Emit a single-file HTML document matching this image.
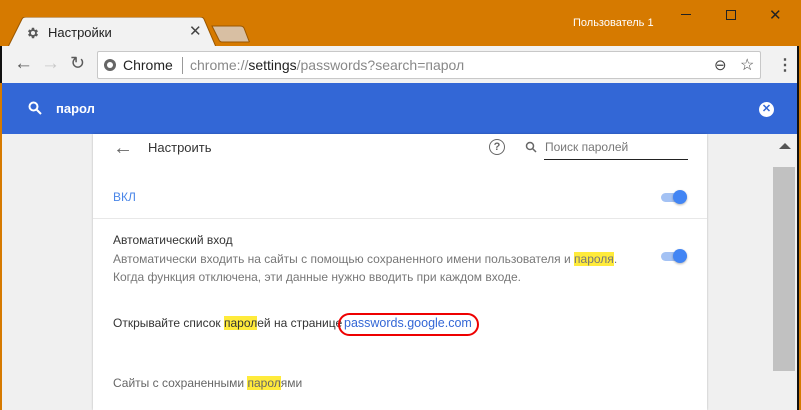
<!DOCTYPE html>
<html><head><meta charset="utf-8"><style>
*{margin:0;padding:0;box-sizing:border-box}
body{width:801px;height:410px;overflow:hidden;background:#d67a00;font-family:"Liberation Sans",Arial,sans-serif;position:relative}
.a{position:absolute}
.hl{background:#ffeb3b}
</style></head><body>
<svg class="a" style="left:0;top:17px" width="260" height="30"><path d="M8 30 L22 2 Q23 0 26 0 L200 0 Q203 0 204 2 L216 30 Z" fill="#f2f2f2" stroke="#9a5700" stroke-width="1"/><path d="M212 9 L240 9 Q243 9 244 11 L249 24 Q250 25 248 25 L222 25 Q220 25 219 23 Z" fill="#d8bfa3" stroke="#9a5700"/></svg>
<svg class="a" style="left:26px;top:26px" width="14" height="14" viewBox="0 0 24 24"><path fill="#5a5a5a" d="M19.4 13a7.5 7.5 0 000-2l2.1-1.6-2-3.5-2.5 1a7 7 0 00-1.7-1L15 3h-4l-.4 2.9a7 7 0 00-1.7 1l-2.5-1-2 3.5L6.6 11a7.5 7.5 0 000 2l-2.1 1.6 2 3.5 2.5-1a7 7 0 001.7 1L11 21h4l.4-2.9a7 7 0 001.7-1l2.5 1 2-3.5zM13 15.5a3.5 3.5 0 110-7 3.5 3.5 0 010 7z" transform="translate(-1 0)"/></svg>
<div class="a" style="left:48px;top:25px;font-size:13px;color:#222">Настройки</div>
<div class="a" style="left:189px;top:22px;font-size:15px;color:#444">✕</div>
<div class="a" style="left:573px;top:17px;font-size:11px;color:#fff">Пользователь 1</div>
<div class="a" style="left:681px;top:14px;width:10px;height:1px;background:#222"></div>
<div class="a" style="left:726px;top:10px;width:10px;height:10px;border:1px solid #222"></div>
<div class="a" style="left:769px;top:6px;font-size:15px;color:#222">✕</div>
<div class="a" style="left:0;top:46px;width:797px;height:37px;background:#f2f2f2;border-left:2px solid #111"></div>
<div class="a" style="left:797px;top:46px;width:4px;height:364px;background:#111;border-right:2px solid #d67a00"></div>
<div class="a" style="left:14px;top:53px;font-size:19px;color:#5a5a5a">←</div>
<div class="a" style="left:41px;top:53px;font-size:19px;color:#c8c8c8">→</div>
<div class="a" style="left:70px;top:53px;font-size:18px;color:#5a5a5a">↻</div>
<div class="a" style="left:97px;top:51px;width:664px;height:28px;background:#fff;border:1px solid #c8c8c8;border-radius:2px"></div>
<div class="a" style="left:104px;top:59px;width:12px;height:12px;border-radius:50%;background:#666"><div class="a" style="left:3px;top:3px;width:6px;height:6px;border-radius:50%;background:#fff"></div></div>
<div class="a" style="left:123px;top:57px;font-size:14px;color:#222">Chrome</div>
<div class="a" style="left:182px;top:57px;width:1px;height:17px;background:#999"></div>
<div class="a" style="left:190px;top:57px;font-size:14px;color:#888">chrome://<span style="color:#222">settings</span>/passwords?search=парол</div>
<div class="a" style="left:714px;top:56px;font-size:15px;color:#444">⊖</div>
<div class="a" style="left:740px;top:55px;font-size:16px;color:#444">☆</div>
<div class="a" style="left:777px;top:55px;font-size:16px;color:#555;font-weight:bold">⋮</div>
<div class="a" style="left:2px;top:83px;width:795px;height:51px;background:#3367d6"></div>
<svg class="a" style="left:28px;top:101px" width="14" height="14"><circle cx="5.5" cy="5.5" r="4" fill="none" stroke="#fff" stroke-width="2"/><path d="M8.5 8.5 L13 13" stroke="#fff" stroke-width="2"/></svg>
<div class="a" style="left:56px;top:101px;font-size:13px;color:#fff;font-weight:bold">парол</div>
<div class="a" style="left:759px;top:102px;width:15px;height:15px;border-radius:50%;background:#fff;color:#3367d6;font-size:11px;font-weight:bold;text-align:center;line-height:15px">✕</div>
<div class="a" style="left:2px;top:134px;width:795px;height:276px;background:#f0f0f0"></div>
<div class="a" style="left:93px;top:134px;width:614px;height:276px;background:#fff;box-shadow:0 0 2px rgba(0,0,0,.25)"></div>
<div class="a" style="left:113px;top:137px;font-size:20px;color:#666">←</div>
<div class="a" style="left:148px;top:140px;font-size:13px;color:#333">Настроить</div>
<div class="a" style="left:489px;top:139px;width:16px;height:16px;border:1.5px solid #666;border-radius:50%;font-size:11px;color:#666;text-align:center;line-height:14px;font-weight:bold">?</div>
<svg class="a" style="left:525px;top:141px" width="12" height="12"><circle cx="5" cy="5" r="3.5" fill="none" stroke="#666" stroke-width="1.5"/><path d="M7.5 7.5L11 11" stroke="#666" stroke-width="1.5"/></svg>
<div class="a" style="left:545px;top:140px;font-size:12px;color:#777">Поиск паролей</div>
<div class="a" style="left:544px;top:159px;width:144px;height:1px;background:#222"></div>
<div class="a" style="left:113px;top:190px;font-size:12px;color:#4a86e8">ВКЛ</div>
<div class="a" style="left:661px;top:193px;width:26px;height:9px;border-radius:5px;background:#a4c2f4"></div>
<div class="a" style="left:673px;top:190px;width:14px;height:14px;border-radius:50%;background:#4285f4;box-shadow:0 1px 2px rgba(0,0,0,.3)"></div>
<div class="a" style="left:93px;top:218px;width:614px;height:1px;background:#e8e8e8"></div>
<div class="a" style="left:113px;top:233px;font-size:12px;color:#333">Автоматический вход</div>
<div class="a" style="left:113px;top:250px;font-size:12px;color:#777;line-height:18px">Автоматически входить на сайты с помощью сохраненного имени пользователя и <span class="hl">пароля</span>.<br>Когда функция отключена, эти данные нужно вводить при каждом входе.</div>
<div class="a" style="left:661px;top:252px;width:26px;height:9px;border-radius:5px;background:#a4c2f4"></div>
<div class="a" style="left:673px;top:249px;width:14px;height:14px;border-radius:50%;background:#4285f4;box-shadow:0 1px 2px rgba(0,0,0,.3)"></div>
<div class="a" style="left:113px;top:316px;font-size:12px;color:#333;white-space:nowrap">Открывайте список <span class="hl">парол</span>ей на странице</div>
<div class="a" style="left:344px;top:316px;font-size:12.5px;color:#3367d6">passwords.google.com</div>
<div class="a" style="left:338px;top:313px;width:141px;height:23px;border:2px solid #e00;border-radius:12px"></div>
<div class="a" style="left:113px;top:376px;font-size:12px;color:#666">Сайты с сохраненными <span class="hl">парол</span>ями</div>
<div class="a" style="left:771px;top:134px;width:26px;height:276px;background:#f0f0f0"></div>
<div class="a" style="left:779px;top:143px;width:0;height:0;border-left:6px solid transparent;border-right:6px solid transparent;border-bottom:6px solid #555"></div>
<div class="a" style="left:773px;top:167px;width:22px;height:204px;background:#c1c1c1"></div>
</body></html>
